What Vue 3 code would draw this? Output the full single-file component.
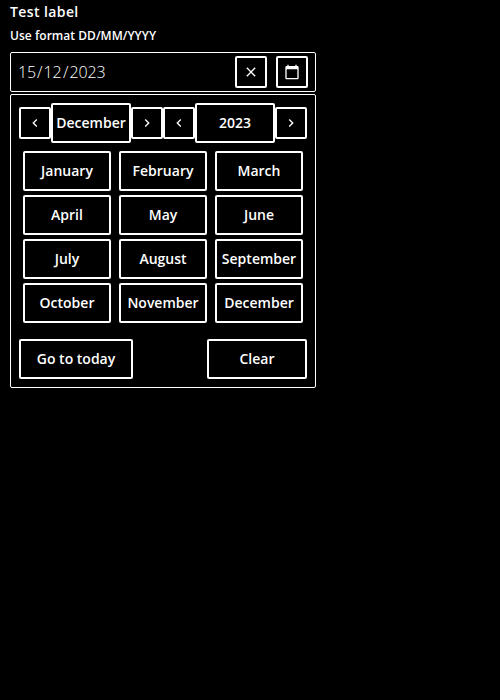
<script setup>
const months = ['January', 'February', 'March', 'April', 'May', 'June', 'July', 'August', 'September', 'October', 'November', 'December']
</script>

<template>
  <main class="page">
    <label class="label">Test label</label>
    <div class="help">Use format DD/MM/YYYY</div>
    <div class="field">
      <div class="value"><span>15</span><span>/</span><span>12</span><span class="slash">/</span><span>2023</span></div>
      <button class="btn icon" aria-label="Clear date">
        <svg viewBox="0 0 24 24" width="16" height="16"><path d="M19 6.41 17.59 5 12 10.59 6.41 5 5 6.41 10.59 12 5 17.59 6.41 19 12 13.41 17.59 19 19 17.59 13.41 12z" /></svg>
      </button>
      <button class="btn icon cal" aria-label="Open calendar">
        <svg viewBox="0 0 24 24" width="16" height="16"><path d="M20 3h-1V1h-2v2H7V1H5v2H4c-1.100 0-2 .9-2 2v16c0 1.100.9 2 2 2h16c1.100 0 2-.9 2-2V5c0-1.100-.9-2-2-2zm0 18H4V8h16v13z" /></svg>
      </button>
    </div>
    <section class="panel">
      <div class="nav">
        <template v-for="title in ['December', '2023']" :key="title">
          <button class="btn icon" :aria-label="'Before ' + title">
            <svg viewBox="0 0 24 24" width="16" height="16"><path d="M15.410 7.410 14 6l-6 6 6 6 1.410-1.410L10.830 12z" /></svg>
          </button>
          <button class="btn title">{{ title }}</button>
          <button class="btn icon" :aria-label="'After ' + title">
            <svg viewBox="0 0 24 24" width="16" height="16"><path d="M10 6 8.590 7.410 13.170 12l-4.580 4.590L10 18l6-6z" /></svg>
          </button>
        </template>
      </div>
      <div class="months">
        <button v-for="m in months" :key="m" class="btn">{{ m }}</button>
      </div>
      <div class="actions">
        <button class="btn today">Go to today</button>
        <button class="btn clear">Clear</button>
      </div>
    </section>
  </main>
</template>

<style>
body { background: #000; }
</style>

<style scoped>
.page { width: 306px; margin-left: 10px; color: #fff; font-family: "Open Sans", sans-serif; }
.label { display: block; height: 24px; line-height: 24px; font-size: 14px; font-weight: 600; letter-spacing: 0.4px; }
.help { height: 24px; margin-bottom: 4px; line-height: 24px; font-size: 12px; font-weight: 600; letter-spacing: 0.03px; }
.field { box-sizing: border-box; display: flex; align-items: center; height: 40px; padding: 0 7px; border: 1px solid #fff; border-radius: 2px; }
.value { display: flex; gap: 1px; flex: 1; font-size: 16px; font-weight: 350; letter-spacing: -0.1px; line-height: 24px; }
.slash { padding-left: 0.5px; }
.btn { box-sizing: border-box; display: flex; align-items: center; justify-content: center; height: 40px; margin: 0; padding: 0; border: 2px solid #fff; border-radius: 2px; background: #000; color: #fff; font: 600 14px/20px "Open Sans", sans-serif; white-space: nowrap; }
.icon { width: 32px; height: 32px; flex: none; }
.cal { margin-left: 9px; }
svg { fill: currentColor; }
.panel { box-sizing: border-box; height: 294px; margin-top: 2px; padding: 8px; border: 1px solid #fff; border-radius: 2px; }
.nav { display: flex; align-items: center; }
.title { width: 80px; }
.months { display: grid; grid-template-columns: repeat(3, 88px); gap: 4px 8px; padding: 8px 4px 16px; }
.actions { display: flex; justify-content: space-between; }
.today { width: 114px; }
.clear { width: 100px; }
</style>
